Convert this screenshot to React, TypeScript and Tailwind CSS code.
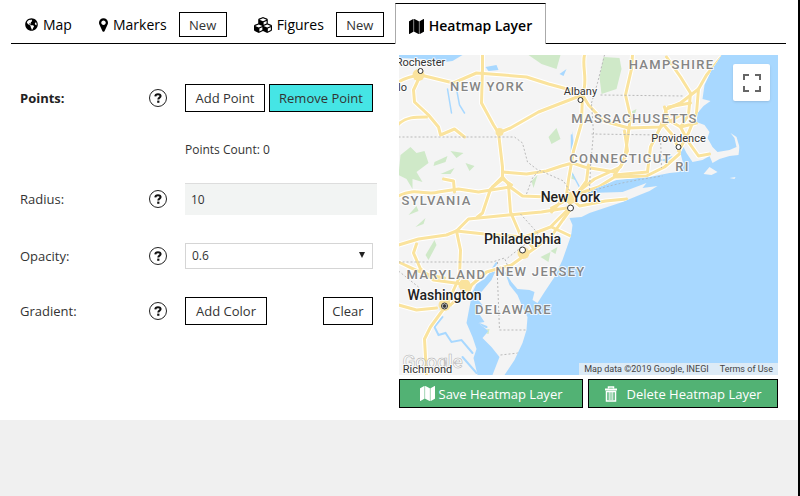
import { useState, type ReactNode } from "react";
import { FaCubes, FaGlobeAmericas } from "react-icons/fa";

const buttonBase = "h-7 cursor-pointer border border-black text-[13px] leading-5";

function TabButton({ icon, children }: { icon: ReactNode; children: ReactNode }) {
  return (
    <button type="button" className="flex cursor-pointer items-center gap-[5px] text-sm leading-5 text-black">
      {icon}
      {children}
    </button>
  );
}

function NewButton() {
  return (
    <button type="button" className="h-[25px] w-12 cursor-pointer border border-black text-[13px] leading-5 text-[#333]">
      New
    </button>
  );
}

function Help({ topic }: { topic: string }) {
  return (
    <button
      type="button"
      aria-label={`Help: ${topic}`}
      className="flex size-[18px] cursor-pointer items-center justify-center rounded-full border border-[#222] text-[#111]"
    >
      <svg viewBox="0 0 8 10" className="h-[10px] w-2" fill="none" aria-hidden="true">
        <path d="M1.300 3.400C1.400 1.900 2.500 1.200 4 1.200c1.600 0 2.600.7 2.600 1.900C6.600 4.700 4.300 4.600 4.300 6.500" stroke="currentColor" strokeWidth="2" />
        <rect x="3.200" y="7.600" width="2.200" height="2.200" fill="currentColor" />
      </svg>
    </button>
  );
}

function MapIcon() {
  return (
    <svg viewBox="0 0 1792 1792" className="size-[15px]" fill="currentColor" aria-hidden="true">
      <path d="M512 0q13 0 22.500 9.500T544 32v1472q0 20-17 28L47 1788q-7 4-15 4-13 0-22.500-9.500T0 1760V288q0-20 17-28L497 4q7-4 15-4zM1760 0q13 0 22.500 9.500T1792 32v1472q0 20-17 28l-480 256q-7 4-15 4-13 0-22.500-9.500T1248 1760V288q0-20 17-28L1745 4q7-4 15-4zM640 0q8 0 14 3l512 256q18 10 18 29v1472q0 13-9.500 22.500T1152 1792q-8 0-14-3L626 1533q-18-10-18-29V32q0-13 9.500-22.500T640 0z" />
    </svg>
  );
}

function MarkerIcon() {
  return (
    <svg viewBox="0 128 1024 1536" className="h-[14px] w-[9px]" fill="currentColor" aria-hidden="true">
      <path d="M768 640q0-106-75-181t-181-75-181 75-75 181 75 181 181 75 181-75 75-181zm256 0q0 109-33 179l-364 774q-16 33-47.500 52t-67.500 19-67.500-19-46.500-52L33 819Q0 749 0 640q0-212 150-362t362-150 362 150 150 362z" />
    </svg>
  );
}

function TrashIcon() {
  return (
    <svg viewBox="0 0 14 16" className="h-4 w-[14px]" fill="none" stroke="currentColor" aria-hidden="true">
      <path d="M1 3.500h12" strokeWidth="2" />
      <path d="M4.500 2.500V1h5v1.500" strokeWidth="1.500" />
      <path d="M2.500 5v10h9V5.500H2.500" strokeWidth="1.500" />
      <path d="M5.200 6v8M7 6v8M8.800 6v8" strokeWidth="1" />
    </svg>
  );
}

const roads = [
  "M0 27C8 22 14 21 22 20L55 28L78 18L105 20L128 22L150 29L176 36",
  "M84 0V14L83 48L95 70L100 78L104 112L104 122L92 134L84 158L79 162",
  "M22 20L15 35L16 47L30 60L40 72L42 80L56 74L66 82",
  "M0 69C8 62 16 62 28 62",
  "M100 78L112 73L140 57L176 43L184 40",
  "M186 0C183 12 190 25 184 40L183 68L175 96L170 125L168 140",
  "M184 40L190 50L205 66L230 73L262 72L282 60",
  "M104 117L128 119L148 116L163 111L174 108",
  "M104 122L113 133L124 141L150 142L172 143L182 138",
  "M0 141C16 132 28 141 40 137L60 134L80 137L112 132",
  "M45 124L55 126L56 137M94 132L104 124L113 130",
  "M234 0L233 14L227 40L232 62L229 84L226 105L216 120",
  "M226 76L229 96L222 112L196 124L178 138",
  "M262 72L252 92L249 117L216 120",
  "M182 138L200 132L216 122L248 121L266 112L282 98",
  "M190 110L188 126L180 137M174 108L186 112L216 117",
  "M268 2L282 22L292 38L290 60L282 72L270 65L266 52",
  "M323 2L308 20L300 34L282 48L268 54L262 72",
  "M300 34L298 58L290 78L280 96M282 72L290 87L300 101L311 99",
  "M267 72L274 80L281 96M270 52L292 48M282 72L298 68",
  "M172 143L181 151L207 146L228 144M168 140L173 153L165 164",
  "M0 190L20 184L48 180L58 176L86 179L126 182L152 172L168 156",
  "M58 176L70 164L110 160L143 157L168 153",
  "M110 130L112 157L121 178L134 192",
  "M165 164L153 181L135 194L113 210L88 217L73 230L52 250",
  "M18 189L15 198L22 214L35 225L64 229",
  "M58 176L62 195L61 222L50 246",
  "M0 207C16 214 24 220 46 223M0 250L18 255L38 253",
  "M48 250L32 272L26 284L28 320M73 230L69 240",
  "M168 140L153 157M172 143L153 153M153 172L174 182",
];

const borders = [
  "M0 82H116L124 88L129 107L138 114L165 126L172 137",
  "M128 139L134 123L140 116",
  "M193 48L199 28L206 0M191 135L192 111L195 78L193 48",
  "M202 40L286 41M193 79L262 80M262 80L263 113",
  "M0 207H94L106 203L112 218M99 207V224L101 275H128",
  "M122 159L140 179L109 203M102 300L120 298M0 216L20 232",
];

const states = [
  { name: "NEW YORK", x: 89, y: 36 },
  { name: "HAMPSHIRE", x: 273, y: 14 },
  { name: "MASSACHUSETTS", x: 236, y: 68 },
  { name: "CONNECTICUT", x: 222, y: 108 },
  { name: "RI", x: 284, y: 116 },
  { name: "SYLVANIA", x: 38, y: 150 },
  { name: "MARYLAND", x: 48, y: 224 },
  { name: "NEW JERSEY", x: 142, y: 221 },
  { name: "DELAWARE", x: 115, y: 259 },
];

const towns = [
  { name: "Rochester", x: 22, y: 11, cx: 22, cy: 16 },
  { name: "Albany", x: 182, y: 40, cx: 182, cy: 45 },
  { name: "Providence", x: 280, y: 87, cx: 280, cy: 92 },
];

const cities = [
  { name: "New York", x: 172, y: 147, cx: 172, cy: 153 },
  { name: "Philadelphia", x: 124, y: 189, cx: 124, cy: 195 },
  { name: "Washington", x: 46, y: 245, cx: 46, cy: 251 },
];

function CoastMap() {
  return (
    <svg
      viewBox="0 0 380 320"
      preserveAspectRatio="xMidYMid slice"
      className="block h-80 w-full bg-[#a8d8ff] font-['Roboto',sans-serif]"
      role="img"
      aria-label="Map of the north-east coast"
    >
      <defs>
        <clipPath id="land">
          <path d="M-20 0H323L313 15L306 30L304 44L312 46L305 51L299 58L298 67L306 70L311 77L309 83L314 92L319 97L331 95L338 92L336 83L332 78L338 82L341 92L340 100L331 101L321 104L314 108L311 101L304 105L294 107L288 98L285 92L282 98L285 110L281 117L271 118L251 122L218 125L198 133L186 140L191 138L224 137L240 131L248 128L244 133L259 131L251 136L241 140L224 147L191 158L183 162L171 163L174 170L173 178L171 185L164 205L156 222L146 237L139 248L134 245L136 237L131 235L119 234L113 227L106 216L111 230L119 240L124 252L129 262L128 275L124 288L116 305L106 320H94L101 302L93 292L84 283L90 276L80 268L86 267L78 255L84 250L79 244L82 238L93 225L97 216L91 218L86 224L78 229L74 237L71 252L68 268L74 282L78 294L75 303L79 320H-20Z" />
        </clipPath>
      </defs>
      <g clipPath="url(#land)">
        <rect x="-20" width="400" height="320" fill="#f4f4f4" />
        <g fill="#cfe9c8">
          <path d="M130 0L143 9L158 14L162 0Z" />
          <path d="M205 2L221 3L223 14L218 34L203 39L201 22Z" />
          <path d="M2 100L12 92L18 98L26 96L30 108L18 117L24 127L14 124L14 134L8 124L0 120Z" />
          <path d="M36 107L49 101L47 107L35 111ZM52 96L65 98L58 103ZM67 108L76 111L71 116ZM42 119L56 113L52 119Z" />
          <path d="M150 82L158 73L162 84L153 89ZM142 202L152 197L150 207ZM152 196L159 192L157 199Z" />
          <path d="M27 200L36 185L38 190L30 205ZM17 172L27 163L25 169ZM79 276L91 274L90 279ZM133 126L139 120L135 133ZM10 160L18 151L20 156Z" />
          <path d="M168 122L174 117L177 125ZM232 57L238 54L236 60Z" />
        </g>
        <g fill="#a8d8ff">
          <path d="M-20 0H64L54 6L38 8L25 4L0 3ZM87 12L98 10L100 15L90 16ZM161 19L168 14L165 21Z" />
          <path d="M174 76L176 98L173 96ZM263 105L274 101L272 109ZM290 60L297 58L294 64Z" />
        </g>
        <g fill="none" stroke="#a8d8ff" strokeLinecap="round">
          <path d="M49 34L53 58M58 34L61 50L66 58M173 80V100M174 119L182 134" strokeWidth="1.500" />
          <path d="M44 262L36 272L40 280L47 278L53 287L63 285L74 298M43 251L41 260M64 302L78 318M76 267L88 272M94 214L98 208" strokeWidth="2" />
        </g>
        <g fill="none" stroke="#fff" strokeWidth="5" strokeLinejoin="round">
          {roads.map((d) => <path key={d} d={d} />)}
        </g>
        <g fill="none" stroke="#fae39d" strokeWidth="3" strokeLinecap="round" strokeLinejoin="round">
          {roads.map((d) => <path key={d} d={d} />)}
        </g>
        <g fill="#fae39d">
          <circle cx="20" cy="20" r="6" />
          <circle cx="172" cy="143" r="6" />
          <circle cx="125" cy="198" r="6" />
          <circle cx="66" cy="230" r="6" />
          <circle cx="46" cy="250" r="6" />
          <circle cx="101" cy="77" r="4" />
        </g>
        <g fill="none" stroke="#b9b9b9" strokeDasharray="2 2">
          {borders.map((d) => <path key={d} d={d} />)}
        </g>
      </g>
      <path d="M305 119L311 112L319 117L313 120ZM331 123L337 122L336 124Z" fill="#f4f4f4" />
      <path d="M186 140C200 132 230 126 264 121" fill="none" stroke="#a9bccb" strokeDasharray="2 2" />

      <text x="4" y="313" className="text-[19px] font-medium" fill="#fff" fillOpacity="0.800" stroke="#b5b5b5" strokeWidth="0.600">
        Google
      </text>
      <g textAnchor="middle" stroke="#fff" strokeOpacity="0.800" strokeWidth="2" paintOrder="stroke" strokeLinejoin="round">
        <g className="text-[13px] font-medium tracking-widest" fill="#858585">
          {states.map((s) => <text key={s.name} x={s.x} y={s.y}>{s.name}</text>)}
        </g>
        <g className="text-[11px]" fill="#333">
          {towns.map((t) => <text key={t.name} x={t.x} y={t.y}>{t.name}</text>)}
          <text x="4" y="36">lo</text>
          <text x="29" y="318">Richmond</text>
        </g>
        <g className="text-sm font-medium" fill="#222">
          {cities.map((c) => <text key={c.name} x={c.x} y={c.y}>{c.name}</text>)}
        </g>
      </g>
      <g fill="#fff" stroke="#333">
        {towns.map((t) => <circle key={t.name} cx={t.cx} cy={t.cy} r="2.500" />)}
        {cities.map((c) => <circle key={c.name} cx={c.cx} cy={c.cy} r="3" />)}
        <circle cx="46" cy="251" r="1.500" fill="#333" />
      </g>
    </svg>
  );
}

export default function App() {
  const [radius, setRadius] = useState("10");
  const [opacity, setOpacity] = useState("0.6");
  return (
    <div className="min-h-screen border-r-2 border-black bg-[#f0f0f0] font-['Open_Sans','Noto_Sans',sans-serif] text-[#333]">
      <div className="bg-white pb-3">
        <nav className="mr-3 ml-[11px] flex h-11 items-end border-b border-black pt-[3px]">
          <div className="flex h-full flex-1 items-center pt-[3px] pl-[14px]">
            <TabButton icon={<FaGlobeAmericas className="size-[13px]" />}>Map</TabButton>
            <div className="ml-[27px] flex items-center gap-3">
              <TabButton icon={<MarkerIcon />}>Markers</TabButton>
              <NewButton />
            </div>
            <div className="ml-[27px] flex items-center gap-3">
              <TabButton icon={<FaCubes className="size-[18px]" />}>Figures</TabButton>
              <NewButton />
            </div>
          </div>
          <div className="-mb-px flex h-[41px] w-[151px] items-center justify-center border border-b-0 border-t-black border-r-[#aaa] border-l-[#aaa] bg-white pt-1 font-semibold">
            <TabButton icon={<MapIcon />}>Heatmap Layer</TabButton>
          </div>
          <div className="w-60" />
        </nav>

        <main className="grid grid-cols-2 px-5 pt-[11px]">
          <form className="pt-[29px] pr-[26px] text-[13px] leading-5" onSubmit={(e) => e.preventDefault()}>
            <div className="grid grid-cols-[129px_36px_1fr] items-center">
              <span className="font-bold text-[#222]">Points:</span>
              <Help topic="Points" />
              <div className="flex justify-between">
                <button type="button" className={`${buttonBase} w-20 bg-white`}>Add Point</button>
                <button type="button" className={`${buttonBase} w-[104px] bg-[#45e5e5]`}>Remove Point</button>
              </div>
              <output className="col-start-3 mt-7 text-xs leading-5">Points Count: 0</output>
            </div>
            <div className="mt-[23px] grid grid-cols-[129px_36px_1fr] items-center">
              <label htmlFor="radius">Radius:</label>
              <Help topic="Radius" />
              <input
                id="radius"
                value={radius}
                onChange={(e) => setRadius(e.target.value)}
                className="-mr-1 h-8 min-w-0 border-t border-[#ddd] bg-[#f2f4f3] px-[6px] text-xs outline-none"
              />
            </div>
            <div className="mt-7 grid grid-cols-[129px_36px_1fr] items-center">
              <label htmlFor="opacity">Opacity:</label>
              <Help topic="Opacity" />
              <div className="relative">
                <select
                  id="opacity"
                  value={opacity}
                  onChange={(e) => setOpacity(e.target.value)}
                  className="block h-[26px] w-full appearance-none border border-[#d5d5d5] bg-white px-[6px] text-xs outline-none"
                >
                  <option>0.2</option>
                  <option>0.4</option>
                  <option>0.6</option>
                  <option>0.8</option>
                </select>
                <svg viewBox="0 0 6 6" className="pointer-events-none absolute top-[9px] right-2 size-[6px]" aria-hidden="true">
                  <path d="M0 0H6L3 6Z" fill="#222" />
                </svg>
              </div>
            </div>
            <div className="mt-7 grid grid-cols-[129px_36px_1fr] items-center">
              <span>Gradient:</span>
              <Help topic="Gradient" />
              <div className="flex justify-between">
                <button type="button" className={`${buttonBase} w-[82px] bg-white`}>Add Color</button>
                <button type="button" className={`${buttonBase} w-[50px] bg-white`}>Clear</button>
              </div>
            </div>
          </form>

          <section>
            <div className="relative overflow-hidden">
              <CoastMap />
              <button
                type="button"
                aria-label="Toggle fullscreen"
                className="absolute top-[9px] right-2 flex size-[37px] cursor-pointer items-center justify-center rounded-xs bg-white shadow"
              >
                <svg viewBox="0 0 18 18" className="size-[18px]" fill="none" stroke="#666" strokeWidth="2" aria-hidden="true">
                  <path d="M1 6V1H6M12 1H17V6M17 12V17H12M6 17H1V12" />
                </svg>
              </button>
              <div className="absolute right-0 bottom-0 flex h-3 items-center gap-[11px] bg-[#e2edf5]/90 px-[5px] font-['Roboto',sans-serif] text-[9px] leading-3 text-[#444]">
                <span>Map data ©2019 Google, INEGI</span>
                <a href="#terms">Terms of Use</a>
              </div>
            </div>
            <div className="mt-1 grid grid-cols-[184fr_190fr] gap-[5px]">
              <button type="button" className="flex h-[29px] cursor-pointer items-center justify-center gap-1 border border-black bg-[#52b274] text-[13px] leading-5 text-white">
                <MapIcon />
                Save Heatmap Layer
              </button>
              <button type="button" className="flex h-[29px] cursor-pointer items-center justify-center gap-2 border border-black bg-[#52b274] text-[13px] leading-5 text-white">
                <TrashIcon />
                Delete Heatmap Layer
              </button>
            </div>
          </section>
        </main>
      </div>
    </div>
  );
}
